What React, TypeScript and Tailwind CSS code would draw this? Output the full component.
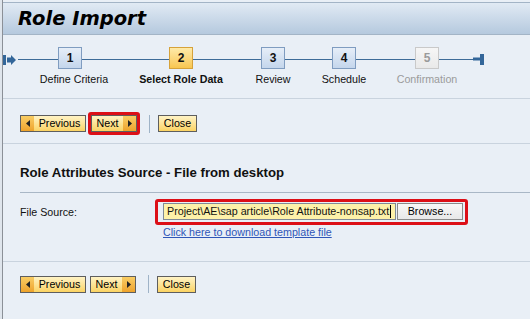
import React from "react";

type Step = { n: number; label: string; state: "done" | "current" | "todo"; shift?: string };

const steps: Step[] = [
  { n: 1, label: "Define Criteria", state: "done", shift: "translate-x-[4px]" },
  { n: 2, label: "Select Role Data", state: "current" },
  { n: 3, label: "Review", state: "done" },
  { n: 4, label: "Schedule", state: "done" },
  { n: 5, label: "Confirmation", state: "todo" },
];

// widths of the connector lines, left to right
const lines = ["w-[40px]", "w-[87px]", "w-[68px]", "w-[47px]", "w-[59px]", "w-[34px]"];

const boxStyle = {
  done: "border-[#7f9cc0] bg-gradient-to-b from-[#e6eef8] to-[#c4d6ec] text-[#111]",
  current: "border-[#d6a23a] bg-gradient-to-b from-[#feeaa8] to-[#f8c64e] text-[#111]",
  todo: "border-[#c9c9c9] bg-gradient-to-b from-[#f6f6f6] to-[#e9e9e9] text-[#9a9a9a]",
};

const labelStyle = {
  done: "text-[#111]",
  current: "text-[#111] font-bold",
  todo: "text-[#9b9b9b]",
};

const Connector = ({ w }: { w: string }) => (
  <div className={`${w} h-px mt-[12px] bg-[#3d6b98]`} />
);

const StepItem = ({ step }: { step: Step }) => (
  <div className="flex flex-col items-center w-[24px]">
    <div
      className={`w-[24px] h-[22px] border flex items-center justify-center text-[12px] font-bold ${boxStyle[step.state]}`}
    >
      {step.n}
    </div>
    <div
      className={`mt-[4px] whitespace-nowrap text-[10.7px] leading-[13px] ${labelStyle[step.state]} ${step.shift ?? ""}`}
    >
      {step.label}
    </div>
  </div>
);

const Previous = () => (
  <div className="flex h-[17px] w-[66px] border border-[#5e5e5e] text-[10.7px] text-black">
    <div className="w-[13px] flex items-center justify-center bg-gradient-to-b from-[#f9cd63] to-[#eea32a]">
      <svg width="4" height="7" viewBox="0 0 4 7">
        <polygon points="4,0 0,3.5 4,7" fill="#222" />
      </svg>
    </div>
    <div className="flex-1 flex items-center justify-center bg-gradient-to-b from-[#fff3c4] to-[#fbd361]">
      Previous
    </div>
  </div>
);

const Next = () => (
  <div className="flex h-[17px] w-[46px] border border-[#5e5e5e] text-[10.7px] text-black">
    <div className="flex-1 flex items-center justify-center bg-gradient-to-b from-[#fff3c4] to-[#fbd361]">
      Next
    </div>
    <div className="w-[13px] flex items-center justify-center bg-gradient-to-b from-[#f9cd63] to-[#eea32a]">
      <svg width="4" height="7" viewBox="0 0 4 7">
        <polygon points="0,0 4,3.5 0,7" fill="#222" />
      </svg>
    </div>
  </div>
);

const Close = () => (
  <div className="flex items-center justify-center h-[17px] w-[39px] border border-[#5e5e5e] text-[10.7px] text-black bg-gradient-to-b from-[#fff3c4] to-[#fbd361]">
    Close
  </div>
);

const Divider = () => <div className="w-px h-[18px] bg-[#9fb3c7]" />;

export default function App() {
  return (
    <div className="w-[530px] h-[319px] overflow-hidden flex bg-[#e9eff6] font-['Liberation_Sans',Arial,sans-serif]">
      <div className="w-[2px] bg-[#dfe5ec]" />
      <div className="flex-1 flex flex-col border-l border-[#8b9097] pt-[2px]">
        {/* title bar */}
        <div className="h-[33px] border-t border-b border-[#a3b4c6] bg-gradient-to-b from-[#e1eaf4] to-[#b5c9de] flex items-center pl-[15px]">
          <h1 className="text-[19.5px] leading-[24px] font-bold italic text-black font-['DejaVu_Sans',Verdana,sans-serif]">
            Role Import
          </h1>
        </div>

        {/* roadmap */}
        <div className="border-b border-[#c9d3de] pt-[12px] pb-[12px]">
          <div className="flex items-start">
            <svg width="15" height="10" viewBox="0 0 15 10" className="mt-[8px]">
              <rect x="0" y="0" width="3" height="10" fill="#336699" />
              <polygon points="4,2.5 8,2.5 8,0 13,5 8,10 8,7.5 4,7.5" fill="#336699" />
            </svg>
            <Connector w={lines[0]} />
            {steps.map((s, i) => (
              <React.Fragment key={s.n}>
                <StepItem step={s} />
                <Connector w={lines[i + 1]} />
              </React.Fragment>
            ))}
            <svg width="11" height="11" viewBox="0 0 11 11" className="mt-[7px]">
              <rect x="0" y="3.5" width="8" height="3" fill="#336699" />
              <rect x="7" y="0" width="4" height="11" fill="#336699" />
            </svg>
          </div>
        </div>

        {/* top toolbar */}
        <div className="flex items-center pl-[17px] pt-[13px] pb-[8px] border-b border-[#c9d3de]">
          <Previous />
          <div className="ml-[2px] border-[3px] border-[#dc0f17] rounded-[3px]">
            <Next />
          </div>
          <div className="ml-[9px]">
            <Divider />
          </div>
          <div className="ml-[8px]">
            <Close />
          </div>
        </div>

        {/* file section */}
        <div className="border-b border-[#c9d3de] pb-[22px] text-[10.7px] leading-[13px]">
          <div className="ml-[17px] border-b border-[#a9b7c6] pt-[21px] pb-[12px]">
            <h2 className="text-[13.2px] leading-[15px] font-bold text-[#111]">
              Role Attributes Source - File from desktop
            </h2>
          </div>
          <div className="flex items-center mt-[6px] pl-[17px]">
            <div className="w-[135px] text-[#111]">File Source:</div>
            <div className="flex border-[3px] border-[#dc0f17] rounded-[3px] pl-[5px] pr-[2px] pt-[1px] pb-[2px]">
              <div className="w-[233px] h-[17px] border border-[#7f8a96] bg-[#fdf1a9] flex items-center pl-[3px] overflow-hidden whitespace-nowrap text-[#111]">
                Project\AE\sap article\Role Attribute-nonsap.txt
                <span className="inline-block w-px h-[13px] bg-black ml-px" />
              </div>
              <div className="ml-px w-[66px] h-[17px] border border-[#8a8a8a] bg-gradient-to-b from-[#f8f8f8] to-[#e8e8e8] flex items-center justify-center text-black">
                Browse...
              </div>
            </div>
          </div>
          <div className="pl-[160px] mt-[1px]">
            <a className="text-[#2f56b8] underline cursor-pointer">Click here to download template file</a>
          </div>
        </div>

        {/* bottom toolbar */}
        <div className="flex items-center pl-[17px] pt-[13px]">
          <Previous />
          <div className="ml-[4px]">
            <Next />
          </div>
          <div className="ml-[12px]">
            <Divider />
          </div>
          <div className="ml-[8px]">
            <Close />
          </div>
        </div>
      </div>
    </div>
  );
}
